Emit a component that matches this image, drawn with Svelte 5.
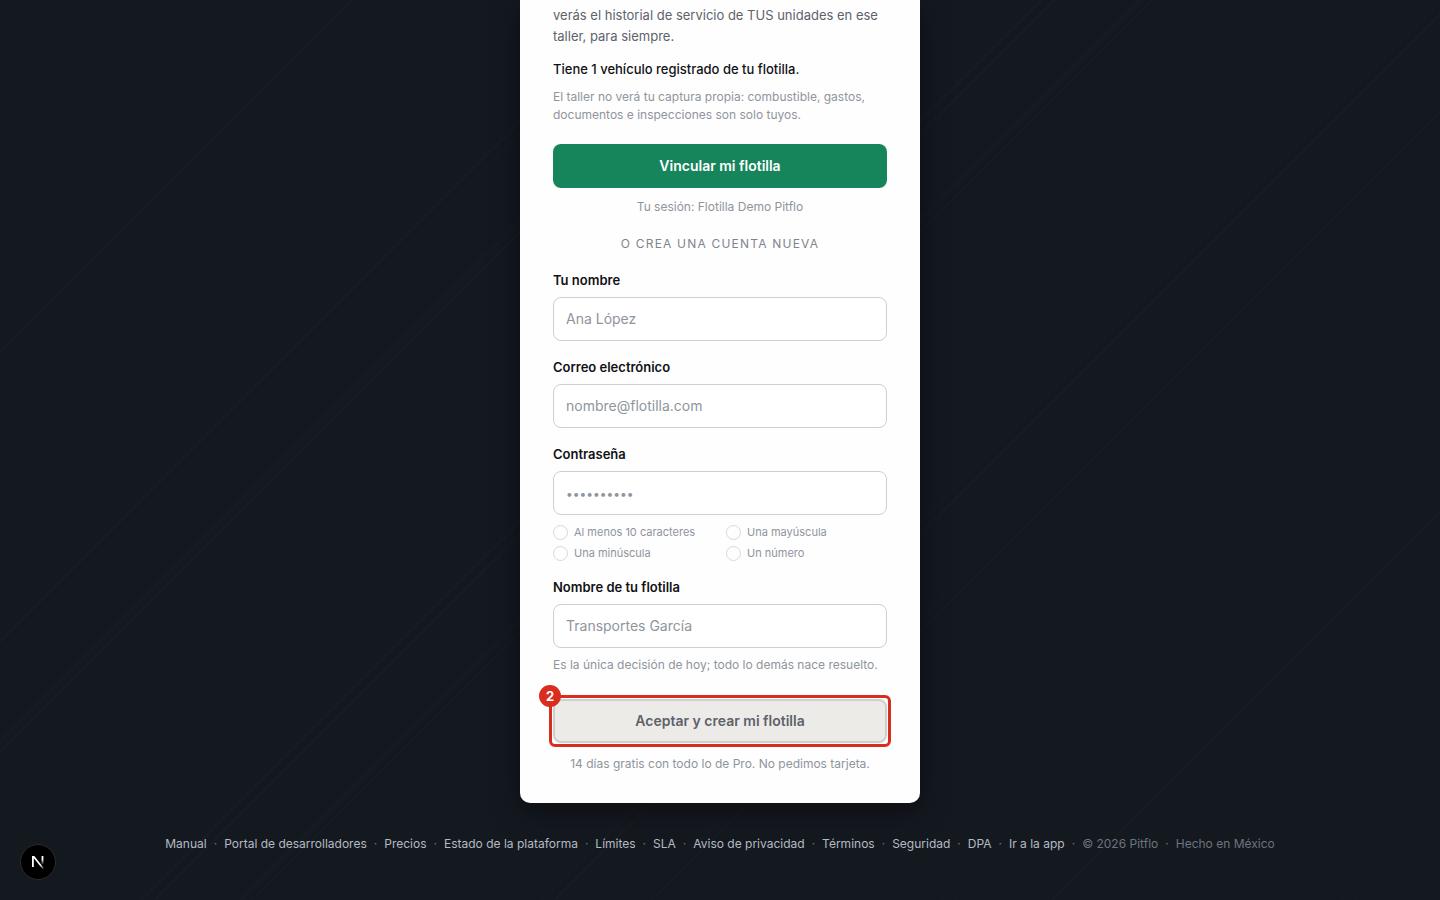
<script lang="ts">
  type Field = {
    id: string;
    label: string;
    type: "text" | "email" | "password";
    placeholder: string;
    autocomplete: "name" | "email" | "new-password" | "organization";
  };

  const fields: Field[] = [
    { id: "name", label: "Tu nombre", type: "text", placeholder: "Ana López", autocomplete: "name" },
    { id: "email", label: "Correo electrónico", type: "email", placeholder: "nombre@flotilla.com", autocomplete: "email" },
    { id: "password", label: "Contraseña", type: "password", placeholder: "••••••••••", autocomplete: "new-password" },
    { id: "fleet", label: "Nombre de tu flotilla", type: "text", placeholder: "Transportes García", autocomplete: "organization" },
  ];

  const rules = ["Al menos 10 caracteres", "Una mayúscula", "Una minúscula", "Un número"];

  const links = [
    "Manual",
    "Portal de desarrolladores",
    "Precios",
    "Estado de la plataforma",
    "Límites",
    "SLA",
    "Aviso de privacidad",
    "Términos",
    "Seguridad",
    "DPA",
    "Ir a la app",
  ];

  let values: Record<string, string> = $state({ name: "", email: "", password: "", fleet: "" });
</script>

<div class="page">
  <main class="card">
    <p class="lead">
      verás el historial de servicio de TUS unidades en ese taller, para siempre.
    </p>
    <p class="count">Tiene 1 vehículo registrado de tu flotilla.</p>
    <p class="note">
      El taller no verá tu captura propia: combustible, gastos, documentos e inspecciones son solo
      tuyos.
    </p>

    <button class="btn primary" type="button">Vincular mi flotilla</button>
    <p class="note session">Tu sesión: Flotilla Demo Pitflo</p>
    <p class="divider">O crea una cuenta nueva</p>

    <form onsubmit={(e) => e.preventDefault()}>
      {#each fields as field (field.id)}
        <div class="field">
          <label for={field.id}>{field.label}</label>
          <input
            id={field.id}
            type={field.type}
            placeholder={field.placeholder}
            autocomplete={field.autocomplete}
            bind:value={values[field.id]}
          />
          {#if field.id === "password"}
            <ul class="rules">
              {#each rules as rule}
                <li><span class="ring" aria-hidden="true"></span>{rule}</li>
              {/each}
            </ul>
          {:else if field.id === "fleet"}
            <p class="note hint">Es la única decisión de hoy; todo lo demás nace resuelto.</p>
          {/if}
        </div>
      {/each}

      <div class="submit">
        <button class="btn muted" type="submit" disabled>Aceptar y crear mi flotilla</button>
        <span class="step">2</span>
      </div>
    </form>
    <p class="note trial">14 días gratis con todo lo de Pro. No pedimos tarjeta.</p>
  </main>

  <footer>
    {#each links as link}
      <a href="#top">{link}</a>
      <span class="dot">·</span>
    {/each}
    <span>© 2026 Pitflo</span>
    <span class="dot">·</span>
    <span>Hecho en México</span>
  </footer>

  <button class="dev" type="button" aria-label="Next.js">
    <svg width="16" height="16" viewBox="0 0 16 16" fill="none" aria-hidden="true">
      <defs>
        <linearGradient id="stem" x1="0" y1="3" x2="0" y2="11" gradientUnits="userSpaceOnUse">
          <stop offset="0.3" stop-color="#fff" />
          <stop offset="1" stop-color="#fff" stop-opacity="0" />
        </linearGradient>
        <linearGradient id="diagonal" x1="8" y1="8" x2="14" y2="15" gradientUnits="userSpaceOnUse">
          <stop offset="0.4" stop-color="#fff" />
          <stop offset="1" stop-color="#fff" stop-opacity="0.1" />
        </linearGradient>
      </defs>
      <path d="M2 2h2.3L14 14.2 12.6 15 3.8 4.2V13H2z" fill="url(#diagonal)" />
      <path d="M11.6 2h1.8v9.5l-1.8-2z" fill="url(#stem)" />
    </svg>
  </button>
</div>

<style>
  :global(body) {
    margin: 0;
    background: #141920;
  }

  .page {
    --ink: #101216;
    --ink-2: #5d636c;
    --ink-3: #8f959d;
    --rule: #cfcfcf;
    --red: #d92d20;
    --tread: rgb(255 255 255 / 1.5%);
    box-sizing: border-box;
    display: flex;
    flex-direction: column;
    align-items: center;
    min-height: 100vh;
    padding: 0 24px;
    font-family: Inter, "Liberation Sans", sans-serif;
    color: var(--ink);
    background:
      repeating-linear-gradient(
        135deg,
        transparent 0 170px,
        var(--tread) 170px 171px,
        transparent 171px 179px,
        var(--tread) 179px 180px,
        transparent 180px 240px,
        var(--tread) 240px 241px,
        transparent 241px 248px,
        var(--tread) 248px 249px,
        transparent 249px 283px
      ),
      #141920;
  }

  p,
  ul {
    margin: 0;
    padding: 0;
  }

  .card {
    box-sizing: border-box;
    width: 100%;
    max-width: 400px;
    padding: 5px 33px 30px;
    background: #fefefe;
    border-radius: 0 0 10px 10px;
    box-shadow: 0 8px 30px rgb(0 0 0 / 45%);
  }

  .lead {
    font-size: 13px;
    line-height: 21px;
    color: var(--ink-2);
  }

  .count {
    margin-top: 12px;
    font-size: 13px;
    font-weight: 500;
    line-height: 21px;
  }

  .note {
    font-size: 12px;
    line-height: 18px;
    color: var(--ink-3);
  }

  .count + .note {
    margin-top: 8px;
  }

  .btn {
    display: block;
    width: 100%;
    height: 44px;
    border: 0;
    border-radius: 8px;
    font: 600 14px/20px Inter, "Liberation Sans", sans-serif;
  }

  .primary {
    margin-top: 20px;
    background: #17855b;
    color: #fff;
  }

  .session,
  .trial {
    text-align: center;
  }

  .session {
    margin-top: 10px;
  }

  .trial {
    margin-top: 12px;
  }

  .divider {
    margin-top: 19px;
    font-size: 12px;
    line-height: 18px;
    letter-spacing: 0.1em;
    text-align: center;
    text-transform: uppercase;
    color: #7f858e;
  }

  form {
    margin-top: 17px;
  }

  .field + .field {
    margin-top: 16px;
  }

  label {
    display: block;
    font-size: 13px;
    font-weight: 600;
    line-height: 20px;
  }

  input {
    box-sizing: border-box;
    display: block;
    width: 100%;
    height: 44px;
    margin-top: 7px;
    padding: 0 12px 2px;
    border: 1px solid var(--rule);
    border-radius: 8px;
    background: #fff;
    color: var(--ink);
    font: 400 14px/20px Inter, "Liberation Sans", sans-serif;
  }

  input::placeholder {
    color: var(--ink-3);
  }

  input[type="password"]::placeholder {
    font-size: 12px;
  }

  .rules {
    display: grid;
    grid-template-columns: 1fr 1fr;
    gap: 6px 12px;
    margin-top: 10px;
    list-style: none;
    font-size: 11px;
    line-height: 15px;
    color: var(--ink-3);
  }

  .rules li {
    display: flex;
    align-items: center;
    gap: 6px;
  }

  .ring {
    box-sizing: border-box;
    width: 15px;
    height: 15px;
    border: 1px solid #d8d8d8;
    border-radius: 50%;
  }

  .hint {
    margin-top: 8px;
  }

  .submit {
    position: relative;
    margin-top: 25px;
    border-radius: 2px;
    outline: 3px solid var(--red);
    outline-offset: 1px;
  }

  .muted {
    border: 2px solid #cfcfcd;
    background: #edebe7;
    color: #5d626c;
  }

  .step {
    position: absolute;
    top: -14px;
    left: -14px;
    width: 22px;
    height: 22px;
    border-radius: 50%;
    background: var(--red);
    color: #fff;
    font-size: 13px;
    font-weight: 700;
    line-height: 22px;
    text-align: center;
  }

  footer {
    display: flex;
    flex-wrap: wrap;
    justify-content: center;
    gap: 7px;
    padding: 32px 0;
    font-size: 12px;
    line-height: 18px;
    color: #6d747e;
  }

  footer a {
    color: #b4bac2;
    text-decoration: none;
  }

  .dev {
    position: fixed;
    bottom: 20px;
    left: 20px;
    display: grid;
    place-items: center;
    width: 36px;
    height: 36px;
    padding: 0;
    border: 1px solid #2b2d30;
    border-radius: 50%;
    background: #000;
  }
</style>
